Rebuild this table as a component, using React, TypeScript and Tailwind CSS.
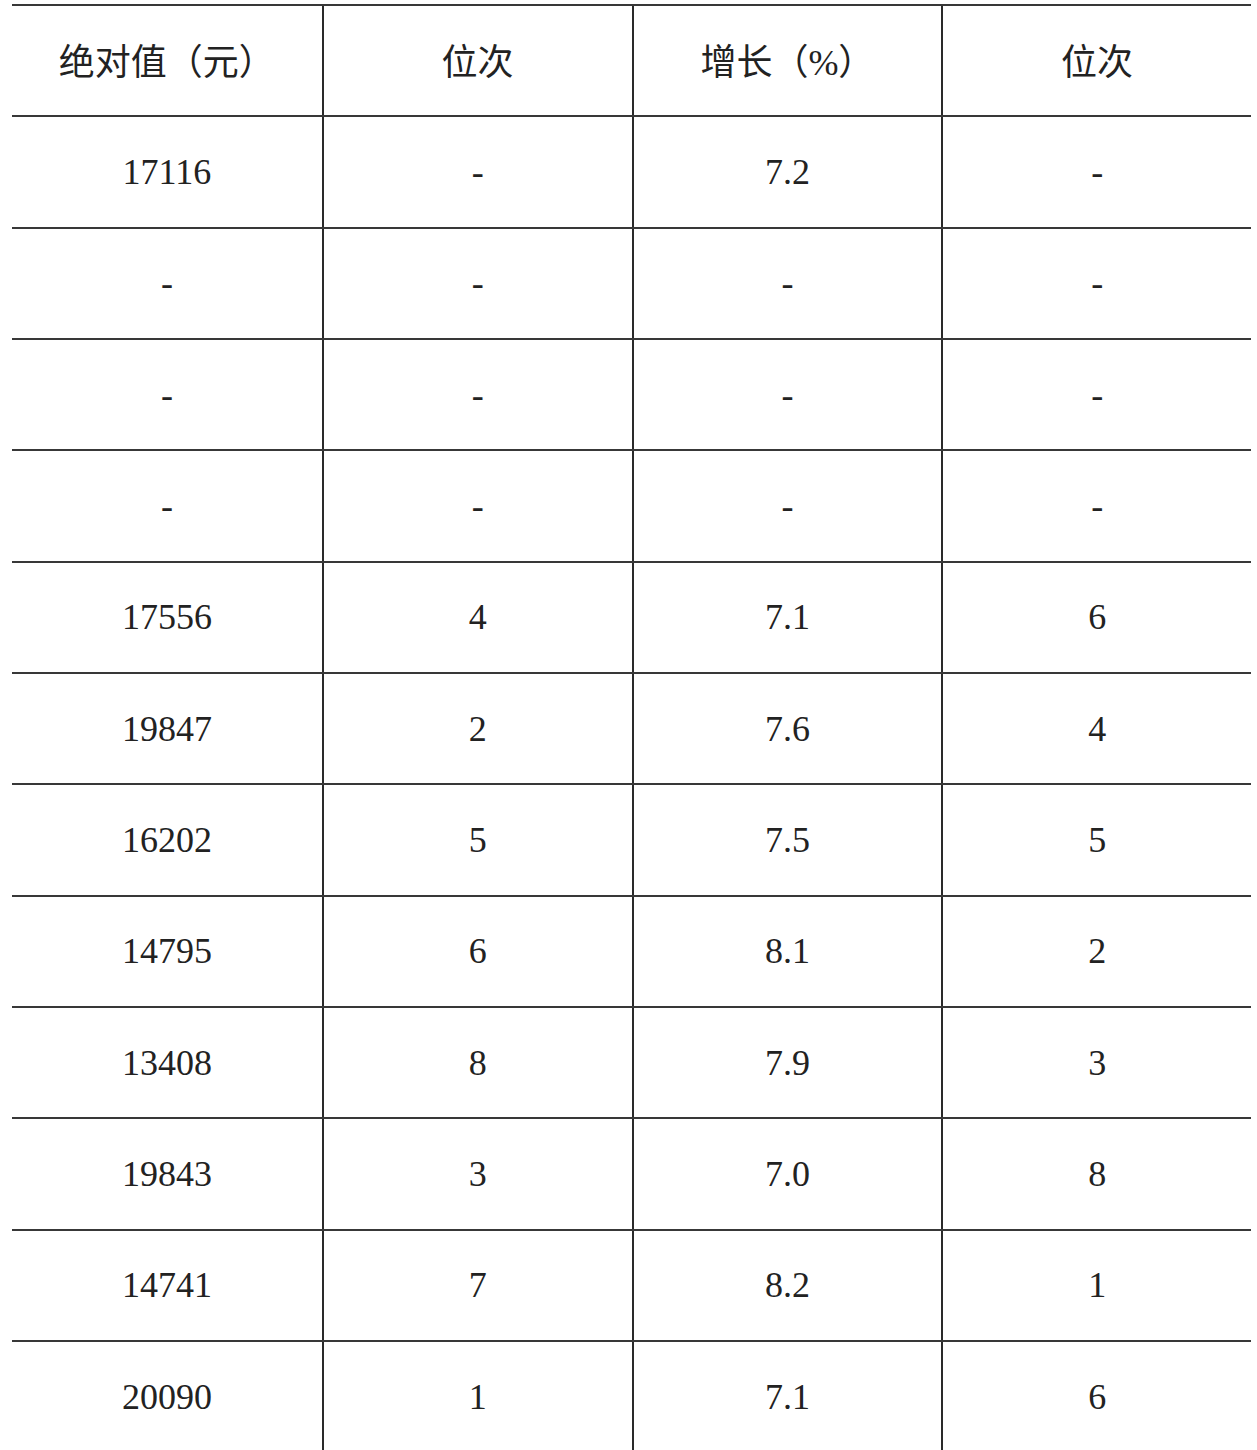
const HEAD = ["绝对值（元）", "位次", "增长（%）", "位次"];

const ROWS: string[][] = [
  ["17116", "-", "7.2", "-"],
  ["-", "-", "-", "-"],
  ["-", "-", "-", "-"],
  ["-", "-", "-", "-"],
  ["17556", "4", "7.1", "6"],
  ["19847", "2", "7.6", "4"],
  ["16202", "5", "7.5", "5"],
  ["14795", "6", "8.1", "2"],
  ["13408", "8", "7.9", "3"],
  ["19843", "3", "7.0", "8"],
  ["14741", "7", "8.2", "1"],
  ["20090", "1", "7.1", "6"],
];

function Row({ cells, head }: { cells: string[]; head?: boolean }) {
  return (
    <div className="grid grid-cols-4 h-[111.33px] border-t-2 border-[#383838]">
      {cells.map((c, i) => (
        <div
          key={i}
          className={
            "flex items-center justify-center text-[36px] text-[#222] font-[family-name:'Liberation_Serif','Noto_Sans_CJK_SC',serif] " +
            (i > 0 ? "border-l-2 border-[#2a2a2a] " : "") +
            (head ? "pt-[5px]" : "")
          }
        >
          {c}
        </div>
      ))}
    </div>
  );
}

export default function App() {
  return (
    <div className="w-[1257px] h-[1450px] overflow-hidden bg-white">
      <div className="ml-[12px] mt-[4px] w-[1239px]">
        <Row cells={HEAD} head />
        {ROWS.map((r, i) => (
          <Row key={i} cells={r} />
        ))}
      </div>
    </div>
  );
}
